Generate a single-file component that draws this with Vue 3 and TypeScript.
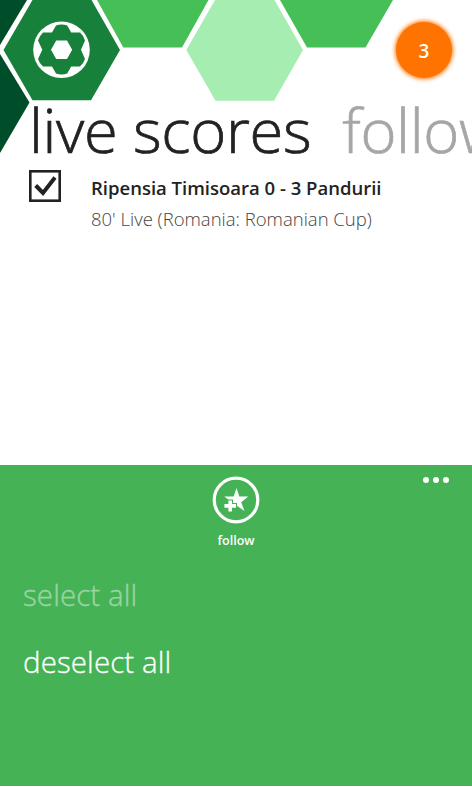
<script setup lang="ts">
import { ref } from 'vue'

interface Match {
  teams: string
  status: string
  selected: boolean
}

const matches = ref<Match[]>([
  { teams: 'Ripensia Timisoara 0 - 3 Pandurii', status: "80' Live (Romania: Romanian Cup)", selected: true },
])
const notifications = ref(3)

function setAll(selected: boolean) {
  matches.value.forEach((m) => (m.selected = selected))
}
</script>

<template>
  <div class="phone">
    <svg class="pattern" width="472" height="160" viewBox="0 0 472 160" aria-hidden="true">
      <polygon points="0,0 27,0 0,45" fill="#004d29" />
      <polygon points="0,54 29.5,102.5 0,153" fill="#004d29" />
      <polygon points="32.5,0 91.5,0 120,50 91,100.3 32.5,100.3 3.5,50" fill="#17803a" />
      <polygon points="97,0 208.5,0 182,47.5 123.3,47.5" fill="#46bf57" />
      <polygon points="215,0 274.5,0 303,50 274,100.7 215.5,100.7 186.3,50" fill="#a6edb1" />
      <polygon points="280,0 393,0 365.5,47.5 307,47.5" fill="#46bf57" />
      <circle cx="61.5" cy="49.8" r="28.3" fill="#fff" />
      <path
        fill="#17803a"
        d="M56 25.6Q61.5 23.6 67.2 25.6L71.2 32.5H80Q84 36 85 40.5L81 49.7L85 59Q83.5 63.5 80 66.5H71.2L67.2 73.5Q61.5 75.5 56 73.5L52 66.5H43Q39.5 63.5 38 59L42.3 49.7L38 40.5Q39.5 36 43 32.5H52Z"
      />
      <polygon points="56.2,40.5 67,40.5 72.2,49.8 67,59 56.2,59 51,49.8" fill="#fff" />
    </svg>

    <header class="top">
      <span class="badge"><span class="count">{{ notifications }}</span></span>
    </header>

    <nav class="pivot">
      <h1 class="tab active">live scores</h1>
      <span class="tab next">follow</span>
    </nav>

    <main class="list">
      <article v-for="m in matches" :key="m.teams" class="match">
        <svg class="check" width="32" height="32" viewBox="0 0 32 32" @click="m.selected = !m.selected">
          <rect x="1.3" y="1.3" width="29.4" height="29.4" fill="#fff" stroke="#222" stroke-width="2.6" />
          <path v-if="m.selected" d="M6.7 15.5L14 23L26 7.6" fill="none" stroke="#222" stroke-width="4" />
        </svg>
        <div class="info">
          <div class="teams">{{ m.teams }}</div>
          <div class="status">{{ m.status }}</div>
        </div>
      </article>
    </main>

    <footer class="appbar">
      <div class="follow">
        <svg width="48" height="48" viewBox="0 0 48 48">
          <circle cx="24" cy="24" r="21.8" fill="none" stroke="#fff" stroke-width="3.2" />
          <path d="M24.5 12L27.3 20.6H36.2L29.2 26.2L32.5 35L24.5 29.6L16.5 35L19.8 26.2L12.3 20.6H21.7Z" fill="#fff" />
          <path d="M18.2 23.4V37M10.5 29.8H25" fill="none" stroke="#46b256" stroke-width="5.6" />
          <path d="M18.2 24.4V35.6M12.4 29.9H24" fill="none" stroke="#fff" stroke-width="3.6" />
        </svg>
        <span class="label">follow</span>
      </div>
      <div class="more"><i></i><i></i><i></i></div>
      <ul class="menu">
        <li class="disabled">select all</li>
        <li @click="setAll(false)">deselect all</li>
      </ul>
    </footer>
  </div>
</template>

<style>
body {
  margin: 0;
  background: #fff;
}
</style>

<style scoped>
.phone {
  position: relative;
  width: 472px;
  height: 787px;
  overflow: hidden;
  display: flex;
  flex-direction: column;
  font-family: 'Open Sans', 'Noto Sans', sans-serif;
  color: #222;
  background: #fff;
}
.pattern {
  position: absolute;
  top: 0;
  left: 0;
}
.top {
  position: relative;
  height: 98px;
  display: flex;
  justify-content: flex-end;
  align-items: flex-start;
  box-sizing: border-box;
  padding: 22px 20px 0 0;
}
.badge {
  width: 56px;
  height: 56px;
  border-radius: 50%;
  background: #ff7300;
  box-shadow: 0 0 4px 1px #ff7300;
  display: flex;
  align-items: center;
  justify-content: center;
  color: #fff;
}
.count {
  font-size: 19px;
  font-weight: 600;
  line-height: 24px;
  padding-top: 2px;
}
.pivot {
  position: relative;
  height: 72px;
  display: flex;
  padding-left: 29px;
  white-space: nowrap;
}
.tab {
  margin: 0;
  font-size: 61.5px;
  font-weight: 300;
  line-height: 62px;
  letter-spacing: -0.35px;
  -webkit-text-stroke: 0.7px currentColor;
}
.next {
  color: #a6a6a6;
  margin-left: 31px;
}
.list {
  flex: 1;
}
.match {
  display: flex;
  padding-left: 29px;
}
.info {
  margin-left: 30px;
  padding-top: 4px;
  white-space: nowrap;
}
.teams {
  font-size: 18.5px;
  font-weight: 600;
  line-height: 27px;
}
.status {
  font-size: 18.5px;
  font-weight: 300;
  line-height: 35px;
  color: #444;
}
.appbar {
  height: 321px;
  margin-bottom: 1px;
  background: #46b256;
  color: #fff;
  display: grid;
  grid-template-columns: 1fr auto 1fr;
  grid-template-rows: 110px 1fr;
}
.follow {
  grid-column: 2;
  display: flex;
  flex-direction: column;
  align-items: center;
  padding-top: 11px;
}
.label {
  font-size: 12.5px;
  font-weight: 600;
  line-height: 18px;
  margin-top: 8px;
}
.more {
  display: flex;
  justify-content: flex-end;
  gap: 4px;
  padding: 12px 23px 0 0;
}
.more i {
  width: 6px;
  height: 6px;
  border-radius: 50%;
  background: #fff;
}
.menu {
  grid-column: 1 / -1;
  grid-row: 2;
  list-style: none;
  margin: 0;
  padding: 0 0 0 23px;
  font-size: 29.5px;
  font-weight: 300;
  line-height: 40px;
  letter-spacing: 0.1px;
  -webkit-text-stroke: 0.3px currentColor;
}
.menu li {
  margin-bottom: 27px;
}
.disabled {
  opacity: 0.45;
}
</style>
